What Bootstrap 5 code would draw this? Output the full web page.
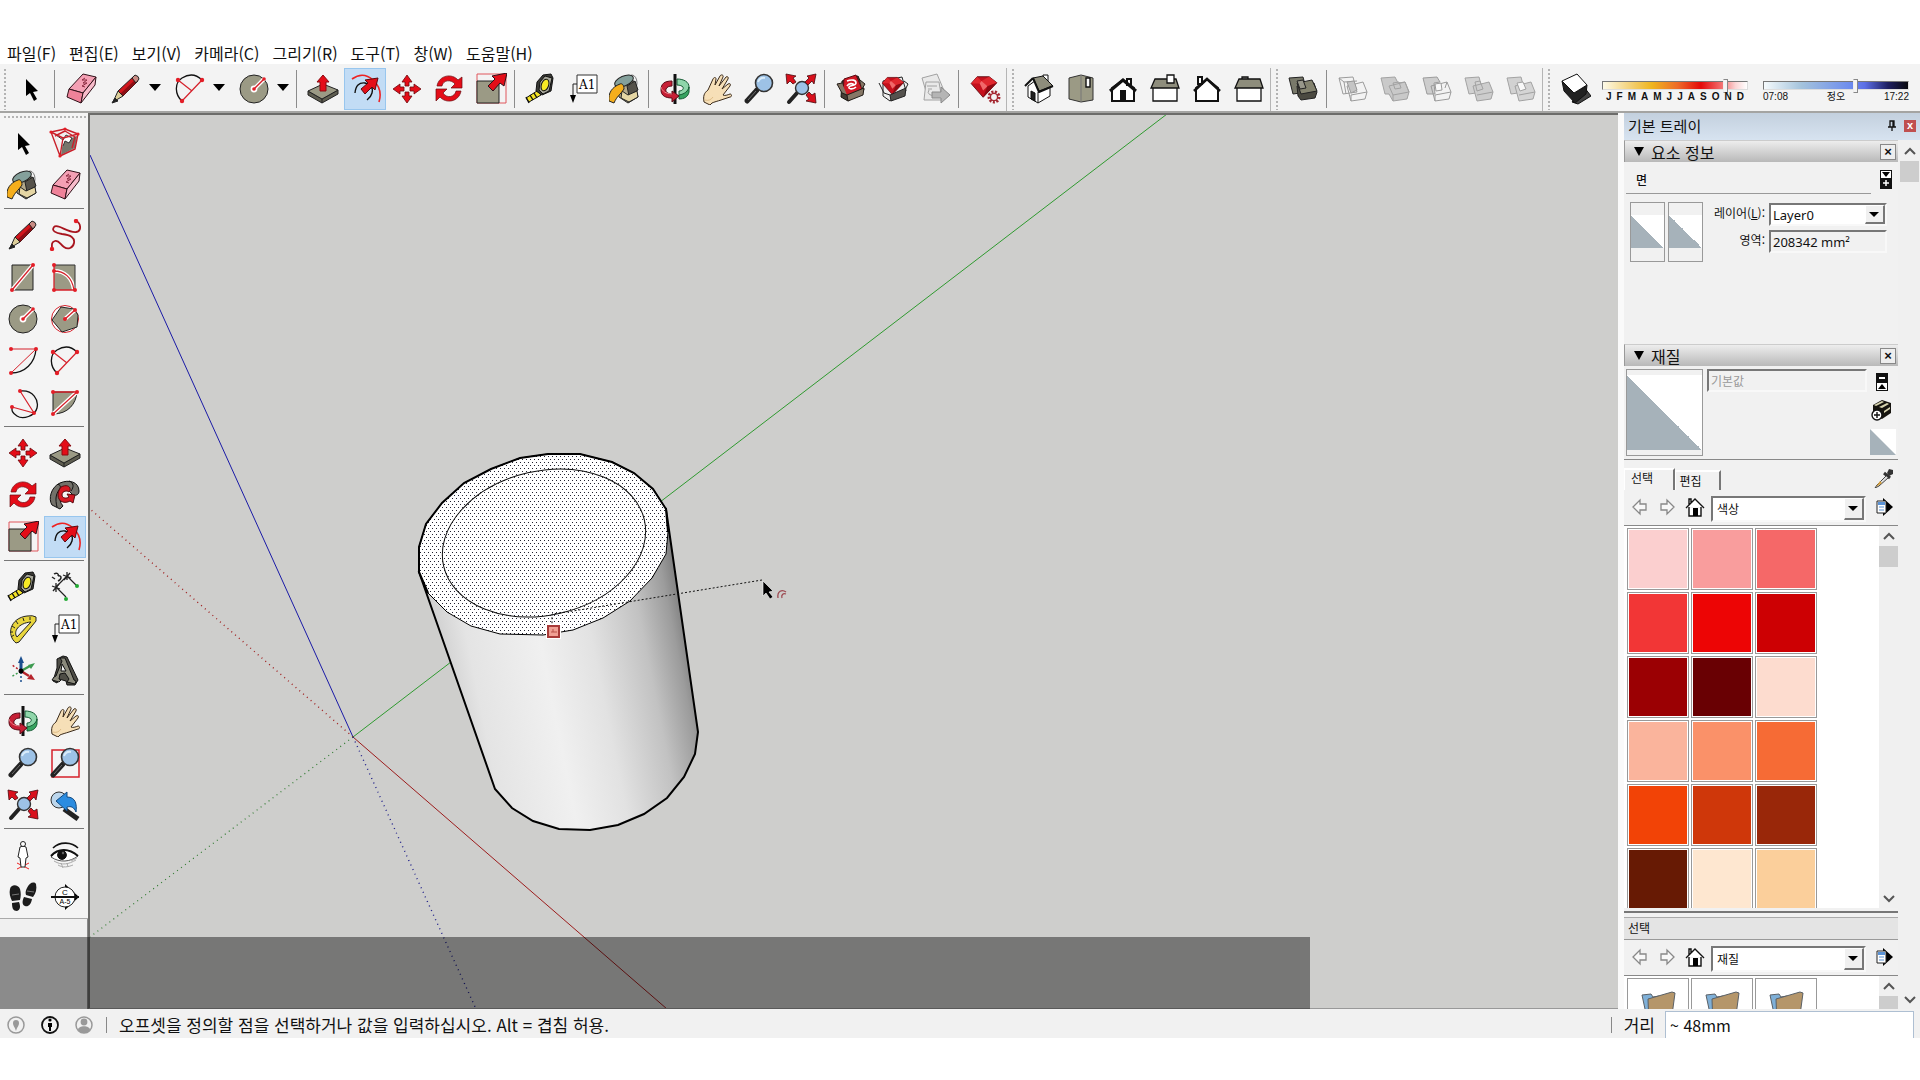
<!DOCTYPE html>
<html lang="ko">
<head>
<meta charset="utf-8">
<meta name="viewport" content="width=device-width, initial-scale=1">
<title>SketchUp</title>
<link rel="stylesheet" href="https://cdn.jsdelivr.net/npm/bootstrap@5.3.0/dist/css/bootstrap.min.css">
<script src="https://cdn.jsdelivr.net/npm/bootstrap@5.3.0/dist/js/bootstrap.bundle.min.js"></script>
<style>
  body { font-family: "Noto Sans CJK KR", "Noto Sans", sans-serif; font-size: 15px; color: #111; background: #fff; line-height: 20px; }
  button { font: inherit; color: inherit; padding: 0; border: 0; background: none; }
  .sheet { height: 100vh; padding: 40px 0 42px; }
  .menus { height: 24px; gap: 13px; padding: 3px 7px; font-size: 16px; }
  .menus a { color: #111; text-decoration: none; }
  .topbar { height: 49px; background: #f3f3f3; border-bottom: 2px solid #a4a4a2; padding-top: 4px; }
  .tool { width: 42px; height: 42px; flex: none; display: flex; align-items: center; justify-content: center; }
  .tool svg { width: 32px; height: 32px; overflow: visible; }
  .tool.on { background: #c2dcf5; border: 1px solid #98c6ee; }
  .faded { opacity: .42; filter: grayscale(1); }
  .with-drop { width: 64px; padding-left: 3px; flex: none; }
  .drop { width: 16px; height: 38px; display: flex; align-items: center; justify-content: center; }
  .drop::before, .pick::after { content: ""; border: 6px solid transparent; border-top: 7px solid #000; border-bottom: 0; }
  .vsep { width: 8px; flex: none; padding: 2px 0 2px 2px; }
  .vsep::before { content: ""; display: block; height: 38px; border-left: 1px solid #8c8c8c; }
  .grip { width: 10px; flex: none; padding: 1px 4px; }
  .grip.next { width: 12px; padding-left: 5px; border-left: 1px solid #b5b5b5; }
  .grip::before { content: ""; display: block; height: 41px; width: 2px; background: repeating-linear-gradient(#b3b3b3 0 2px, transparent 2px 4px); }
  .sun { width: 146px; flex: none; padding-top: 10px; margin-left: 6px; font: bold 10px/10px "Liberation Sans", "Noto Sans CJK KR", sans-serif; }
  .sun + .sun { margin-left: 15px; }
  .sun input { display: block; width: 100%; height: 14px; margin: 0; appearance: none; background: none; }
  .sun input::-webkit-slider-runnable-track { height: 9px; border: 1px solid #777; border-right-color: #ddd; border-bottom-color: #ddd; }
  .months::-webkit-slider-runnable-track { background: linear-gradient(90deg, #fdfae8, #f2cb65 22%, #efb51e 34%, #ee6a28 52%, #e40808 68%, #f26d6d 82%, #fbd5d5 92%, #fff); }
  .hours::-webkit-slider-runnable-track { background: linear-gradient(90deg, #f5fafc, #a4c3dc 26%, #6d8cee 60%, #5c6fe6 70%, #1e1f62 86%, #08080d); }
  .sun input::-webkit-slider-thumb { appearance: none; width: 5px; height: 14px; margin-top: -3px; background: #f4f4f4; border: 1px solid #888; border-left-color: #eee; }
  .side { width: 88px; flex: none; background: #f0f0f0; border-right: 1px solid #8a8a8a; }
  .palette { background: #f4f4f4; padding: 3px 2px 0; border-bottom: 1px solid #aaa; width: 88px; }
  .palette::before { content: ""; display: block; height: 2px; margin: 0 0 4px 2px; background: repeating-linear-gradient(90deg, #b3b3b3 0 2px, transparent 2px 4px); }
  .palette hr { margin: 2px 2px 5px; border-top: 1px solid #777; opacity: 1; }
  .scene { background: #cececc; border-top: 2px solid #6c6c6a; border-left: 2px solid #6c6c6a; overflow: hidden; border-bottom: 1px solid #999; min-width: 0; }
  .scene svg { display: block; width: 100%; height: 100%; }
  .caption-band { position: absolute; left: 0; bottom: 0; width: 68.25%; height: 72px; background: rgba(0,0,0,.42); }
  .tray { width: 302px; flex: none; background: #f1f1f1; border-left: 6px solid #fafafa; }
  .tray-title { height: 27px; background: linear-gradient(#c3d0de, #d7e3f0); padding: 0 4px 2px; font-size: 15px; }
  .close-red { width: 12px; height: 12px; background: #c0504f; color: #fff; font: bold 11px/11px "Liberation Sans", sans-serif; }
  .stack { width: 274px; }
  .part { height: 22px; padding: 0 2px 0 9px; font-size: 16px; background: linear-gradient(#ededed, #b9b9b9); border-top: 1px solid #ccc; border-left: 1px solid #999; }
  .part::before { content: ""; border: 5px solid transparent; border-top: 9px solid #000; border-bottom: 0; margin-right: 7px; }
  .part button { width: 16px; height: 16px; border: 1px solid #888; background: #eee; font: bold 13px/12px "Liberation Sans", sans-serif; }
  .entity { height: 182px; padding: 8px 2px 0; font-size: 12px; }
  .entity-name { height: 24px; border-bottom: 1px solid #999; width: 245px; padding: 0 10px; font-weight: 500; }
  .facts { gap: 3px; }
  .fields { padding-top: 1px; margin-left: -3px; }
  .swatch-tall { width: 35px; height: 60px; border: 1px solid #999; padding: 12px 0 13px; }
  .halves { background: linear-gradient(to top right, #a6b2ba 50%, #fff 50%); width: 100%; height: 100%; }
  .lbl { width: 62px; text-align: right; font-size: 12px; }
  .box { border: 2px solid #f8f8f8; border-top-color: #777; border-left-color: #777; height: 23px; width: 118px; padding: 0 2px; font: 13px/18px "Noto Sans", "Noto Sans CJK KR", sans-serif; color: #111; background: #f1f1f1; border-radius: 0; }
  .pick { position: relative; display: block; width: 118px; }
  .pick select { appearance: none; background: #fff; width: 100%; }
  .pick::before { content: ""; position: absolute; right: 2px; top: 2px; bottom: 2px; width: 20px; background: #f0f0f0; border: 1px solid #fff; border-right: 2px solid #777; border-bottom: 2px solid #777; pointer-events: none; }
  .pick::after { position: absolute; right: 8px; top: 50%; margin-top: -3px; border-width: 5px; border-top-width: 5px; pointer-events: none; }
  .pick.wide { width: 157px; }
  .wide select { display: block; height: 26px; font: 12px/20px "Noto Sans CJK KR", sans-serif; padding-left: 4px; }
  .material { height: 94px; padding: 3px 2px 0; border-bottom: 1px solid #888; }
  .preview { width: 77px; height: 87px; border: 1px solid #999; padding: 5px 0; }
  .material .box { width: 160px; margin-left: 4px; font: 12px/18px "Noto Sans CJK KR", sans-serif; color: #999; }
  .tabs { height: 30px; padding-top: 8px; font-size: 12px; line-height: 16px; }
  .tabs button { height: 22px; border-top: 2px solid #fff; border-right: 2px solid #777; border-left: 1px solid #fff; }
  .tabs .front { width: 51px; padding-right: 14px; padding-bottom: 4px; }
  .tabs .back { width: 46px; padding-right: 14px; height: 20px; margin-top: 2px; }
  .browse { height: 36px; border-bottom: 1px solid #888; padding: 3px 4px 0 7px; }
  .browse button { width: 18px; height: 24px; margin-right: 9px; display: flex; align-items: center; padding-bottom: 4px; }
  .browse button.nest { width: 20px; margin-right: 6px; }
  .browse button:last-child { margin: 0 0 0 10px; width: 18px; }
  .list { background: #fff; overflow: hidden; }
  .list.short { height: 33px; }
  .chips { width: 255px; padding: 2px 3px; gap: 2px; align-content: flex-start; overflow: hidden; }
  .chip { width: 62px; height: 62px; border: 1px solid #999; padding: 1px; flex: none; }
  .chip i { display: block; width: 100%; height: 100%; }
  .scroller { width: 19px; flex: none; background: #f0f0f0; }
  .scroller svg { width: 19px; height: 20px; flex: none; display: block; }
  .scroller b { display: block; height: 21px; background: #cdcdcd; }
  .outer { width: 22px; padding: 1px 1px 0 2px; }
  .split { border-top: 2px solid #777; height: 7px; margin-top: 3px; border-bottom: 1px solid #aaa; }
  .second { height: 22px; background: #e4e4e4; border-bottom: 1px solid #999; padding: 0 4px; font-size: 12px; }
  .status { height: 29px; background: #f1f1f1; font-size: 17px; padding-top: 2px; }
  .status > svg { width: 18px; height: 20px; margin: 0 9px 0 7px; flex: none; }
  .rule { width: 1px; height: 16px; background: #888; flex: none; }
  .measure { width: 249px; height: 27px; margin: 0 6px 0 10px; border: 1px solid #aebfd2; border-bottom: 0; padding: 0 4px; font-size: 16px; background: #fff; color: #111; }
</style>
</head>
<body>
<svg width="0" height="0" class="position-absolute" aria-hidden="true">
  <defs>
    <symbol id="select" viewBox="0 0 32 32"><path d="M11 6v17l4-3 4 8 3-2-4-7 5-1z"/></symbol>
    <symbol id="eraser" viewBox="0 0 32 32" stroke="#301018" stroke-linejoin="round"><path d="M18 1l13 3-13 16-14-4z" fill="#f4a0b4"/><path d="M4 16l14 4-2 10-14-6z" fill="#ef8299"/><path d="M31 4l-1 8-14 18 2-10z" fill="#f8bccb"/><path d="M20 5l-3 2 5 0-4 3 4 0-5 3 3 1" fill="none" stroke="#8a2b40"/></symbol>
    <symbol id="pencil" viewBox="0 0 32 32" stroke="#222" stroke-linejoin="round"><path d="M8 18L24 3l4 5-15 15z" fill="#d2151c"/><path d="M10 21L26 6l2 2-15 15z" fill="#8c0e14" stroke="none"/><path d="M22 5l3-3q4 1 4 4l-3 4z" fill="#c98c84"/><path d="M8 18l5 5-10 6z" fill="#ddcf9a"/><path d="M5 25l3 3-6 2z" fill="#222"/></symbol>
    <symbol id="arc2" viewBox="0 0 32 32" fill="none"><path d="M8 28C1 22 0 10 8 5s15-3 20 2" stroke="#111" stroke-width="1.3"/><path d="M8 28L28 7M4 7l14 11" stroke="#d5202a" stroke-width="1.2"/><g fill="#e31e27"><circle cx="8" cy="28" r="2.2"/><circle cx="28" cy="7" r="2.2"/><circle cx="4" cy="7" r="2.2"/></g></symbol>
    <symbol id="circle" viewBox="0 0 32 32"><circle cx="16" cy="16" r="14" fill="#9b9a85" stroke="#222"/><path d="M16 16L26 6" stroke="#fff" stroke-width="4"/><circle cx="16" cy="16" r="3.4" fill="#fff"/><path d="M16 16L26 6" stroke="#d5202a" stroke-width="1.4"/><circle cx="16" cy="16" r="1.8" fill="#e31e27"/><circle cx="26" cy="6" r="1.8" fill="#e31e27"/></symbol>
    <symbol id="push" viewBox="0 0 32 32" stroke="#222" stroke-linejoin="round"><path d="M1 18v4l14 8 16-9v-4l-16 9z" fill="#5e5d50"/><path d="M1 18l15-7 15 6-16 9zM15 26v4" fill="#9b9a85"/><path d="M16 2l6 7h-3v9h-6V9h-3z" fill="#e40d18" stroke="#8a0a10"/></symbol>
    <symbol id="offset" viewBox="0 0 32 32" fill="none"><path d="M3 6Q14-2 24 7t6 22" stroke="#e22" stroke-width="1.6"/><path d="M6 20q1-11 10-10 9 2 7 10-1 4-5 7" stroke="#111" stroke-width="1.4"/><path d="M29 5l-3 12-3-3-7 7-4-5 7-6-3-3z" fill="#e40d18" stroke="#5a0a0e"/></symbol>
    <symbol id="move" viewBox="0 0 32 32"><g fill="#e40d18" stroke="#6a0a0e" stroke-width=".8"><path d="M16 2l5 7h-3v4h-4V9h-3z"/><path d="M16 30l-5-7h3v-4h4v4h3z"/><path d="M2 16l7-5v3h4v4H9v3z"/><path d="M30 16l-7 5v-3h-4v-4h4v-3z"/></g></symbol>
    <symbol id="rotate" viewBox="0 0 32 32" fill="#e40d18" stroke="#6a0a0e" stroke-width=".7"><path d="M4 13C6 2 19 0 25 7l4-3v11H18l4-4C18 6 10 7 9 13z"/><path d="M28 18c-2 11-15 13-21 6l-4 4V16h11l-4 4c4 6 12 4 13-2z"/></symbol>
    <symbol id="scale" viewBox="0 0 32 32"><path d="M2 30V1h29v29z" fill="none" stroke="#e0575c"/><path d="M2 8h22v22H2z" fill="#9b9a85" stroke="#222"/><path d="M32 0l-3 13-4-3-7 8-5-5 7-7-3-3z" fill="#e40d18" stroke="#301018"/></symbol>
    <symbol id="tape" viewBox="0 0 32 32" stroke="#111" stroke-linejoin="round"><path d="M12 18l4 4L4 29l-3-4z" fill="#f4e327"/><path d="M1 24l3 6M5 22l3 5M9 20l3 5" stroke-width="1.4"/><path d="M12 9l6-7 8-1 2 4-2 13-9 4-6-4z" fill="#3a3a36"/><path d="M15 9l5-6 7 2-3 13-6 3-4-4z" fill="#a8a89c"/><ellipse cx="20" cy="12" rx="3.6" ry="6" transform="rotate(20 20 12)" fill="#f7ea25"/></symbol>
    <symbol id="textt" viewBox="0 0 32 32"><path d="M10 2h20v18H10z" fill="#fff" stroke="#333"/><path d="M10 11H6v12" fill="none" stroke="#222"/><path d="M3 22h6l-3 8z"/><text x="12" y="16" font-family="DejaVu Serif, serif" font-size="12">A1</text></symbol>
    <symbol id="paint" viewBox="0 0 32 32" stroke="#222" stroke-linejoin="round"><ellipse cx="23" cy="10" rx="5" ry="8" fill="none" stroke="#777"/><path d="M8 8L25 8l4 16-10 6-9-6z" fill="#b5aa8b"/><path d="M18 13l8-5 3 9-9 6z" fill="#55524a"/><path d="M13 18l6 4 9-4 1 6-9 5-8-4z" fill="#e5d6a4"/><ellipse cx="15" cy="8" rx="10" ry="5" transform="rotate(-24 15 8)" fill="#84a09b"/><path d="M11 11C3 14-1 20 0 28l5 2c3-7 6-8 10-14 0-4-2-6-4-5z" fill="#f5ae1c"/></symbol>
    <symbol id="orbit" viewBox="0 0 32 32" stroke-linejoin="round"><path d="M18 6c7 0 12 3 12 8s-4 8-10 9v-5c3 0 5-2 4-4-1-1-3-2-6-2z" fill="#8fd6aa" stroke="#155c34"/><path d="M30 14v5c-1 5-5 7-10 7v-4c6-1 9-4 10-8z" fill="#37a360" stroke="#155c34"/><path d="M16 1v30" stroke="#111" stroke-width="3"/><path d="M13 8C5 8 2 11 2 17s5 8 11 8v4l7-6-7-5v3c-4 0-7-2-6-5 1-2 3-3 6-3z" fill="#c61f35" stroke="#5a0a16"/><path d="M2 14c1 4 5 7 11 7" fill="none" stroke="#f08088"/></symbol>
    <symbol id="hand" viewBox="0 0 32 32"><path d="M3 29c-1-6 0-9 4-12L12 6c1-2 3-2 3 0l-1 6 5-9c1-2 4-1 3 1l-4 9 7-9c1-1 3 0 2 2l-6 10 6-5c2-1 3 0 2 2l-7 9c1 1 5 0 7-1 2 0 2 3 0 3l-9 3c-3 1-7 2-9 3l-2 2z" fill="#f6dfb7" stroke="#3a2a1a"/><path d="M4 27c3 1 6 0 8-3" fill="none" stroke="#dfbd87"/></symbol>
    <symbol id="zoom" viewBox="0 0 32 32"><path d="M14 17L4 28" stroke="#222" stroke-width="5" stroke-linecap="round"/><path d="M13 18L5 27" stroke="#6b6b6b"/><circle cx="21" cy="10" r="8.5" fill="#9dc2e6" stroke="#333" stroke-width="1.6"/><path d="M15 9q2-5 7-4" fill="none" stroke="#d9ecfa" stroke-width="2"/></symbol>
    <symbol id="zoomext" viewBox="0 0 32 32"><path d="M12 20L4 29" stroke="#222" stroke-width="4" stroke-linecap="round"/><circle cx="17" cy="15" r="6.5" fill="#9dc2e6" stroke="#333" stroke-width="1.4"/><g fill="#d9101c" stroke="#4a0a0e" stroke-width=".8"><path d="M1 1l10 2-3 2 3 4-3 2-3-3-3 3z"/><path d="M31 1l-9 2 2 2-4 4 3 3 4-4 2 3z"/><path d="M31 30l-1-10-3 2-3-3-3 3 3 4-3 2z"/></g></symbol>
    <symbol id="warehouse" viewBox="0 0 32 32" stroke-linejoin="round"><path d="M7 8l16-5 6 14-16 11-7-4z" fill="#433c34" stroke="#15110e"/><path d="M9 6l12-4 6 14-13 8-6-5z" fill="#d01824" stroke="#5a0a10"/><path d="M12 8c5-2 9-1 9 2s-6 2-7 4 4 3 7 0M12 13c2-3 6-3 7-1" fill="none" stroke="#fff" stroke-width="1.6"/><path d="M7 10l-5 1 5 9 5 2M25 7l5 4-3 5M12 22l17-7-1 7-15 6z" fill="#867766" stroke="#221c18"/></symbol>
    <symbol id="extbox" viewBox="0 0 32 32" stroke-linejoin="round"><path d="M6 8l19-4 4 14-16 10-7-5z" fill="#efefef" stroke="#222"/><use href="#ruby" x="4" y="3" width="24" height="20"/><path d="M13 22l16-7-1 8-14 5z" fill="#55524e" stroke="#222"/><path d="M2 10l5 10 6 2M27 8l4 3-2 4" fill="none" stroke="#222"/></symbol>
    <symbol id="ruby" viewBox="0 0 32 28"><path d="M8 2h14l9 7-16 17L1 10z" fill="#c5101c" stroke="#5a060c"/><path d="M8 2l5 5 9-5 9 7-11 4-8-3-11 0z" fill="#e0282e"/><path d="M13 7l7 6-5 5-4-8z" fill="#f0696a"/><path d="M20 13l11-4-16 17z" fill="#8d0a13"/></symbol>
    <symbol id="share" viewBox="0 0 32 32" fill="#e9e9e9" stroke="#a2a2a2"><path d="M3 5l15-4 8 19-17 5z"/><path d="M7 9h13l3 18H5z"/><path d="M8 13h10M9 16h4M10 17a3 3 0 1 0 5 4" fill="none"/><path d="M13 19h9v-5l9 8-9 8v-5h-9z" fill="#b5b5b5" stroke="#8a8a8a"/></symbol>
    <symbol id="extman" viewBox="0 0 32 32"><use href="#ruby" x="1" y="2" width="28" height="24"/><circle cx="25" cy="24" r="5" fill="#f3f3f3" stroke="#a42630" stroke-width="3" stroke-dasharray="2 1.4"/><circle cx="25" cy="24" r="3.6" fill="#f3f3f3" stroke="#a42630" stroke-width="1.4"/></symbol>
    <symbol id="iso" viewBox="0 0 32 32" stroke="#111" stroke-linejoin="round"><path d="M5 13l11-8 11 8v10l-12 7-10-6z" fill="#fff"/><path d="M15 19v11" /><path d="M20 2h5v9h-5z" fill="#fff"/><path d="M10 5l10-2 10 10-14 5z" fill="#8e8d7c"/><path d="M10 5L2 13M10 5l6 14 14-6" fill="none" stroke-width="2"/><path d="M8 18l4 2v8l-4-2z" fill="#222"/></symbol>
    <symbol id="topv" viewBox="0 0 32 32" stroke="#333"><path d="M4 5l12-3 12 3v22l-12 2-12-3z" fill="#9b9a85"/><path d="M16 2v27" stroke="#777"/><path d="M21 5h4v9h-4z" fill="#fff" stroke="#111" stroke-width="1.4"/></symbol>
    <symbol id="front" viewBox="0 0 32 32"><path d="M20 6h4v6h-4zM5 15L16 7l11 8v13H5z" fill="#fff" stroke="#111" stroke-width="2"/><path d="M3 18L16 7l13 11" fill="none" stroke="#111" stroke-width="3"/><path d="M13 17h6v12h-6z" fill="#111"/></symbol>
    <symbol id="right" viewBox="0 0 32 32" stroke="#111" stroke-width="1.3"><path d="M4 14h24v14H4z" fill="#fff"/><path d="M6 6h21l3 9H2z" fill="#8e8d7c"/><path d="M18 2h7v8h-7z" fill="#fff"/></symbol>
    <symbol id="back" viewBox="0 0 32 32"><path d="M7 4h4v7H7zM5 15L16 6l11 9v13H5z" fill="#fff" stroke="#111" stroke-width="2"/><path d="M3 18L16 6l13 12" fill="none" stroke="#111" stroke-width="2.6"/></symbol>
    <symbol id="left" viewBox="0 0 32 32" stroke="#111" stroke-width="1.3"><path d="M9 4h6v3H9z" fill="#aaa"/><path d="M4 14h24v14H4z" fill="#fff"/><path d="M6 6h21l3 9H2z" fill="#8e8d7c"/></symbol>
    <symbol id="shell" viewBox="0 0 32 32" stroke="#222" stroke-linejoin="round"><path d="M2 5l14-1 4 15-14 2z" fill="#79796a"/><path d="M10 13l17-3 3 9-2 6-14 2-3-4z" fill="#4b4a41"/><path d="M10 10l15-3 5 11-16 3z" fill="#84836f"/><path d="M10 8l6-1 3 8-6 1z" fill="#98978a"/></symbol>
    <symbol id="outl" viewBox="0 0 32 32" stroke="#222" fill="none"><path d="M2 5l14-1 4 15-14 2zM2 5l5 4 13-1M7 9l2 12"/><path d="M10 13l16-4 4 10-2 7-14 2zM14 22l16-3M14 22v6"/><path d="M10 9l7-1 3 9-6 3z" fill="#888"/></symbol>
    <symbol id="union" viewBox="0 0 32 32" stroke="#333"><path d="M2 5l14-1 3 6 7-1 4 10-2 7-14 2-4-7H6z" fill="#909090"/><path d="M10 13l16-4 4 10-16 3zM14 10l6-1 2 6-6 1zM14 22v6" fill="none"/></symbol>
    <symbol id="subtract" viewBox="0 0 32 32" stroke="#222" fill="none"><path d="M2 5l14-1 3 5-6 1 1 11-8 0z" fill="#999"/><path d="M10 13l16-4 4 10-2 7-14 2zM14 22l16-3M14 22v6M26 9l-2 6"/><path d="M14 11l6-1 1 7-6 1z" fill="#fff"/></symbol>
    <symbol id="trim" viewBox="0 0 32 32" stroke="#333"><path d="M2 5l14-1 4 15-14 2z" fill="#a5a5a5"/><path d="M10 13l16-4 4 10-2 7-14 2z" fill="#999"/><path d="M12 9l5-1 3 8-6 2zM14 22l16-3" fill="none"/></symbol>
    <symbol id="splitt" viewBox="0 0 32 32" stroke="#333"><path d="M2 5l14-1 4 15-14 2z" fill="#a5a5a5"/><path d="M10 13l16-4 4 10-2 7-14 2z" fill="#aaa"/><path d="M12 10l6-1 3 7-6 2z" fill="#fff"/><path d="M14 22l16-3" fill="none"/></symbol>
    <symbol id="shadow" viewBox="0 0 32 32" stroke="#111" stroke-linejoin="round"><path d="M13 29l6 2 13-8-7-9z" fill="#444"/><path d="M3 8l2 10 11 12 11-9 1-9-12 8z" fill="#222"/><path d="M3 8l15-7 10 11-13 8z" fill="#fff"/></symbol>
    <symbol id="component" viewBox="0 0 32 32" stroke-linejoin="round"><path d="M4 5l12-3 13 5-2 15-16 7z" fill="#f2eeee"/><path d="M14 14l14-5-2 12-14 7z" fill="#77766c"/><path d="M7 8l7 5 3-5 6 3-3 5-4-2-2 5" fill="#fff" stroke="#333"/><path d="M2 5l14-3 13 5-3 15-15 7zM2 5l12 6 15-4M14 11l-3 18M6 9l10-5 10 6-3 11" fill="none" stroke="#c9202b" stroke-width="1.4"/><g fill="#e31e27"><circle cx="2" cy="5" r="1.6"/><circle cx="16" cy="2" r="1.6"/><circle cx="29" cy="7" r="1.6"/><circle cx="11" cy="29" r="1.6"/></g></symbol>
    <symbol id="free" viewBox="0 0 32 32" fill="none"><path d="M27 2c5 2 6 10 0 11C19 14 8 4 5 8s2 6 8 7c9 1 13 4 12 9s-6 7-10 4-5-7-9-6-3 4-3 8" stroke="#a8141e" stroke-width="1.8"/><g fill="#e31e27"><circle cx="27" cy="2" r="2.2"/><circle cx="3" cy="30" r="2.2"/></g></symbol>
    <symbol id="rect" viewBox="0 0 32 32"><path d="M5 4h21v25H5z" fill="#9b9a85" stroke="#222"/><path d="M5 29L26 4" stroke="#fff" stroke-width="4"/><path d="M5 29L26 4" stroke="#d5202a" stroke-width="1.3"/><g fill="#e31e27"><circle cx="5" cy="29" r="2"/><circle cx="26" cy="4" r="2"/></g></symbol>
    <symbol id="rotrect" viewBox="0 0 32 32"><path d="M5 4h21v25H5z" fill="#9b9a85"/><path d="M5 10c10 0 18 6 20 19" fill="none" stroke="#fff" stroke-width="4"/><path d="M5 4h21v25" fill="none" stroke="#333"/><path d="M5 4v25h21M5 10c10 0 18 6 20 19" fill="none" stroke="#d5202a" stroke-width="1.3"/><g fill="#e31e27"><circle cx="5" cy="4" r="2"/><circle cx="5" cy="10" r="2"/><circle cx="5" cy="29" r="2"/><circle cx="26" cy="29" r="2"/></g></symbol>
    <symbol id="polygon" viewBox="0 0 32 32"><circle cx="16" cy="16" r="13.5" fill="#fff" stroke="#d5202a"/><path d="M25 6L12 4 3 17l10 12 15-5 1-12z" fill="#9b9a85" stroke="#222"/><path d="M16 16L26 7" stroke="#fff" stroke-width="4"/><path d="M16 16L26 7" stroke="#d5202a" stroke-width="1.4"/><circle cx="16" cy="16" r="2" fill="#e31e27"/><circle cx="26" cy="7" r="2" fill="#e31e27"/></symbol>
    <symbol id="arc1" viewBox="0 0 32 32" fill="none"><path d="M29 4C28 18 18 28 4 28" stroke="#111" stroke-width="1.3"/><path d="M4 4h25L4 28" stroke="#d5202a"/><g fill="#e31e27"><circle cx="4" cy="4" r="2"/><circle cx="29" cy="4" r="2"/><circle cx="4" cy="28" r="2"/></g></symbol>
    <symbol id="arc3" viewBox="0 0 32 32" fill="none"><path d="M14 4c12-1 18 9 16 17S16 33 10 29s-5-6-5-9" stroke="#111" stroke-width="1.3"/><path d="M13 4l14 22L5 20" stroke="#d5202a" stroke-width="1.2"/><g fill="#e31e27"><circle cx="13" cy="4" r="2"/><circle cx="27" cy="26" r="2"/><circle cx="5" cy="20" r="2"/></g></symbol>
    <symbol id="pie" viewBox="0 0 32 32"><path d="M4 5h24c-1 12-9 22-24 22z" fill="#9b9a85" stroke="#222"/><path d="M4 27L28 5" stroke="#fff" stroke-width="4"/><path d="M4 5h24L4 27" fill="none" stroke="#d5202a" stroke-width="1.3"/><g fill="#e31e27"><circle cx="4" cy="5" r="2"/><circle cx="28" cy="5" r="2"/><circle cx="4" cy="27" r="2"/></g></symbol>
    <symbol id="follow" viewBox="0 0 32 32" stroke="#111" stroke-linejoin="round"><path d="M30 12C30 3 20 0 11 4S-1 20 3 26l8 4 3-3c-6-7-3-15 5-16l5 5c4 1 6-1 6-4z" fill="#73716a"/><path d="M9 5c4 2 2 4 1 6-3 4-4 9-2 17M20 2c5 2 5 6 2 10" fill="none"/><path d="M12 8c8-4 11 2 8 5-2-2-7-1-7 3 0 3 4 4 7 2l-2-3 8 1-2 8-3-2c-5 3-12 1-12-6 0-3 1-5 3-8z" fill="#d81722" stroke="#5a0a0e"/></symbol>
    <symbol id="dim" viewBox="0 0 32 32" fill="none" stroke="#222"><path d="M18 5l9 9M7 16l10 10M7 16L18 5" stroke-width="1.2"/><path d="M14 4l8 3M21 2l-6 7M18 1v8M3 15l8 3M10 13l-6 7M7 12v9" stroke-width="1.3"/><path d="M5 3c3-2 5 0 4 2M9 5c4-1 4 3 0 5M3 6l3 2" stroke-width="1.5"/><circle cx="28" cy="15" r="2" fill="#2a3" stroke="none"/><circle cx="17" cy="28" r="2" fill="#2a3" stroke="none"/></symbol>
    <symbol id="protractor" viewBox="0 0 32 32" stroke="#222" stroke-linejoin="round"><path d="M9 30C-1 22 3 5 20 3q6-1 9 1v4L12 29z" fill="#e8d53c"/><path d="M10 24c-4-5 1-14 14-15z" fill="#f3f3f3"/><path d="M4 24l3-2M3 19h3M5 13l3 2M9 8l2 3M16 5l1 3M23 4v3" fill="none"/></symbol>
    <symbol id="axes" viewBox="0 0 32 32"><path d="M14 16V6" stroke="#1b4f8f" stroke-width="3"/><path d="M14 1l3 7h-6z" fill="#1b4f8f"/><path d="M14 16L23 11" stroke="#3d9b50" stroke-width="2.5"/><path d="M28 8l-4 6-3-4z" fill="#3d9b50"/><path d="M14 16l8 5" stroke="#b6242c" stroke-width="2.5"/><path d="M28 25l-8-1 4-5z" fill="#b6242c"/><g stroke-dasharray="2 2" stroke-width="1.5"><path d="M14 17v10" stroke="#1b4f8f"/><path d="M14 16L4 22" stroke="#3d9b50"/><path d="M14 16L5 10" stroke="#b6242c"/></g><circle cx="14" cy="16" r="2.5"/></symbol>
    <symbol id="bigA" viewBox="0 0 32 32" stroke="#111" stroke-linejoin="round"><path d="M8 4l6-3 4 1 11 23-3 5-8 0-1-4-7-2-2 4-4-2 4-13z" fill="#4e4d46"/><path d="M11 3l5 0 9 22 2 1-1 3-8-2 2-3-4-6-5 1-1 5 2 1-2 2-7-2 2-3 2-1 6-15z" fill="#8b8a7c"/><path d="M13 9l4 7h-5z" fill="#f3f3f3"/></symbol>
    <symbol id="zoomwin" viewBox="0 0 32 32"><path d="M3 3h27v27H3z" fill="none" stroke="#d5202a" stroke-width="1.5"/><use href="#zoom"/></symbol>
    <symbol id="prev" viewBox="0 0 32 32"><circle cx="10" cy="11" r="8" fill="#bcd6ec" stroke="#333"/><path d="M15 20l14 10" stroke="#222" stroke-width="5"/><path d="M7 12l11-9v5c9 0 10 8 9 15-2-5-5-6-9-5v4z" fill="#2b8ce0" stroke="#124a80"/></symbol>
    <symbol id="person" viewBox="0 0 32 32" fill="#fff" stroke="#222"><path d="M10 24l12 6M22 24l-12 6" stroke="#e22"/><path d="M13 8q3-2 6 0l2 10-2 1-1 9h-4l-1-9-2-1z"/><circle cx="16" cy="5" r="2.5"/></symbol>
    <symbol id="eye" viewBox="0 0 32 32" fill="none" stroke="#111"><path d="M4 9C11 2 23 3 29 9" stroke-width="1.6"/><path d="M2 18c7-9 18-9 27-1-8 6-18 7-27 1z" fill="#fff" stroke="#555"/><path d="M2 17c7-8 18-8 27 0" stroke-width="2"/><circle cx="13" cy="16" r="4.4" fill="#111"/><circle cx="14" cy="14" r="1.2" fill="#fff"/><path d="M5 22c8 5 15 3 22-1M9 26c5 3 10 2 15 0M22 22l6-3M12 24l2 5M18 24l1 4" stroke="#aaa"/></symbol>
    <symbol id="feet" viewBox="0 0 32 32" fill="#1c1c1c"><path d="M3 8c1-5 8-5 10 0 1 4 1 7 0 11l-8 1C3 16 2 12 3 8zM5 22l7-1c2 5 1 8-2 9-4 0-5-3-5-8zM20 7c2-5 7-7 9-4 1 5 0 9-3 13l-7-2c-1-3 0-5 1-7zM17 16l8 2c-1 6-4 8-7 7s-3-5-1-9z"/><path d="M5 14l7-1M20 10l7 1" stroke="#777" stroke-width="1"/></symbol>
    <symbol id="section" viewBox="0 0 32 32"><path d="M16 3l14 13-14 13z"/><circle cx="16" cy="16" r="10" fill="#fff" stroke="#222"/><path d="M2 16h28" stroke="#111" stroke-width="2"/><text x="16" y="14" font-size="8" text-anchor="middle" font-family="Liberation Sans, sans-serif">C</text><text x="16" y="23" font-size="7" text-anchor="middle" font-family="Liberation Sans, sans-serif">A-5</text></symbol>
    <symbol id="goback" viewBox="0 0 18 18"><path d="M2 9l7-7v4h6v6H9v4z" fill="#f8f8f8" stroke="#888" stroke-width="1.3"/></symbol>
    <symbol id="gofwd" viewBox="0 0 18 18"><path d="M16 9L9 2v4H3v6h6v4z" fill="#f8f8f8" stroke="#888" stroke-width="1.3"/></symbol>
    <symbol id="home" viewBox="0 0 20 20"><path d="M4 10v9h12v-9M1 11l9-9 9 9M4 8V2h2v4" fill="#fff" stroke="#111" stroke-width="1.4"/><path d="M8 11h5v8H8z"/></symbol>
    <symbol id="details" viewBox="0 0 18 18"><path d="M7 0l10 9-10 9z"/><path d="M1 3h9v12H1z" fill="#fff" stroke="#222"/><path d="M2 4h7v3H2z" fill="#5b93d6"/><path d="M3 9h5M3 12h5" stroke="#5b93d6"/></symbol>
    <symbol id="up" viewBox="0 0 19 20"><path d="M5 13l5-5 5 5" fill="none" stroke="#555" stroke-width="2"/></symbol>
    <symbol id="down" viewBox="0 0 19 20"><path d="M5 8l5 5 5-5" fill="none" stroke="#555" stroke-width="2"/></symbol>
    <symbol id="folder" viewBox="0 0 58 58"><path d="M13 15l9-1 2 3 6-1v30l-11-3z" fill="#7fb0d8" stroke="#5a6066"/><path d="M19 19l24-7 3 1-4 30-22 3z" fill="#b5966a" stroke="#5a6066"/></symbol>
  </defs>
</svg>

<div class="sheet d-flex flex-column overflow-hidden">
  <nav class="menus d-flex flex-shrink-0" aria-label="메뉴">
    <a href="#">파일(F)</a><a href="#">편집(E)</a><a href="#">보기(V)</a><a href="#">카메라(C)</a><a href="#">그리기(R)</a><a href="#">도구(T)</a><a href="#">창(W)</a><a href="#">도움말(H)</a>
  </nav>

  <div class="topbar d-flex flex-shrink-0 overflow-hidden" role="toolbar">
    <span class="grip"></span>
    <button class="tool" type="button"><svg><use href="#select"/></svg></button>
    <span class="vsep"></span>
    <button class="tool" type="button"><svg><use href="#eraser"/></svg></button>
    <span class="with-drop d-flex"><button class="tool" type="button"><svg><use href="#pencil"/></svg></button><button class="drop" type="button"></button></span>
    <span class="with-drop d-flex"><button class="tool" type="button"><svg><use href="#arc2"/></svg></button><button class="drop" type="button"></button></span>
    <span class="with-drop d-flex"><button class="tool" type="button"><svg><use href="#circle"/></svg></button><button class="drop" type="button"></button></span>
    <span class="vsep"></span>
    <button class="tool" type="button"><svg><use href="#push"/></svg></button>
    <button class="tool on" type="button"><svg><use href="#offset"/></svg></button>
    <button class="tool" type="button"><svg><use href="#move"/></svg></button>
    <button class="tool" type="button"><svg><use href="#rotate"/></svg></button>
    <button class="tool" type="button"><svg><use href="#scale"/></svg></button>
    <span class="vsep"></span>
    <button class="tool" type="button"><svg><use href="#tape"/></svg></button>
    <button class="tool" type="button"><svg><use href="#textt"/></svg></button>
    <button class="tool" type="button"><svg><use href="#paint"/></svg></button>
    <span class="vsep"></span>
    <button class="tool" type="button"><svg><use href="#orbit"/></svg></button>
    <button class="tool" type="button"><svg><use href="#hand"/></svg></button>
    <button class="tool" type="button"><svg><use href="#zoom"/></svg></button>
    <button class="tool" type="button"><svg><use href="#zoomext"/></svg></button>
    <span class="vsep"></span>
    <button class="tool" type="button"><svg><use href="#warehouse"/></svg></button>
    <button class="tool" type="button"><svg><use href="#extbox"/></svg></button>
    <button class="tool" type="button"><svg><use href="#share"/></svg></button>
    <span class="vsep"></span>
    <button class="tool" type="button"><svg><use href="#extman"/></svg></button>
    <span class="grip next"></span>
    <button class="tool" type="button"><svg><use href="#iso"/></svg></button>
    <button class="tool" type="button"><svg><use href="#topv"/></svg></button>
    <button class="tool" type="button"><svg><use href="#front"/></svg></button>
    <button class="tool" type="button"><svg><use href="#right"/></svg></button>
    <button class="tool" type="button"><svg><use href="#back"/></svg></button>
    <button class="tool" type="button"><svg><use href="#left"/></svg></button>
    <span class="grip next"></span>
    <button class="tool" type="button"><svg><use href="#shell"/></svg></button>
    <span class="vsep"></span>
    <button class="tool faded" type="button"><svg><use href="#outl"/></svg></button>
    <button class="tool faded" type="button"><svg><use href="#union"/></svg></button>
    <button class="tool faded" type="button"><svg><use href="#subtract"/></svg></button>
    <button class="tool faded" type="button"><svg><use href="#trim"/></svg></button>
    <button class="tool faded" type="button"><svg><use href="#splitt"/></svg></button>
    <span class="grip next"></span>
    <button class="tool" type="button"><svg><use href="#shadow"/></svg></button>
    <div class="sun">
      <input class="months" type="range" min="0" max="1000" value="865" aria-label="날짜">
      <div class="d-flex justify-content-between px-1"><span>J</span><span>F</span><span>M</span><span>A</span><span>M</span><span>J</span><span>J</span><span>A</span><span>S</span><span>O</span><span>N</span><span>D</span></div>
    </div>
    <div class="sun">
      <input class="hours" type="range" min="0" max="1000" value="640" aria-label="시간">
      <div class="d-flex justify-content-between fw-normal"><span>07:08</span><span>정오</span><span>17:22</span></div>
    </div>
  </div>

  <div class="d-flex flex-grow-1 position-relative overflow-hidden">
    <aside class="side">
      <div class="palette">
        <div class="d-flex flex-wrap">
          <button class="tool" type="button"><svg><use href="#select"/></svg></button><button class="tool" type="button"><svg><use href="#component"/></svg></button>
          <button class="tool" type="button"><svg><use href="#paint"/></svg></button><button class="tool" type="button"><svg><use href="#eraser"/></svg></button>
        </div>
        <hr>
        <div class="d-flex flex-wrap">
          <button class="tool" type="button"><svg><use href="#pencil"/></svg></button><button class="tool" type="button"><svg><use href="#free"/></svg></button>
          <button class="tool" type="button"><svg><use href="#rect"/></svg></button><button class="tool" type="button"><svg><use href="#rotrect"/></svg></button>
          <button class="tool" type="button"><svg><use href="#circle"/></svg></button><button class="tool" type="button"><svg><use href="#polygon"/></svg></button>
          <button class="tool" type="button"><svg><use href="#arc1"/></svg></button><button class="tool" type="button"><svg><use href="#arc2"/></svg></button>
          <button class="tool" type="button"><svg><use href="#arc3"/></svg></button><button class="tool" type="button"><svg><use href="#pie"/></svg></button>
        </div>
        <hr>
        <div class="d-flex flex-wrap">
          <button class="tool" type="button"><svg><use href="#move"/></svg></button><button class="tool" type="button"><svg><use href="#push"/></svg></button>
          <button class="tool" type="button"><svg><use href="#rotate"/></svg></button><button class="tool" type="button"><svg><use href="#follow"/></svg></button>
          <button class="tool" type="button"><svg><use href="#scale"/></svg></button><button class="tool on" type="button"><svg><use href="#offset"/></svg></button>
        </div>
        <hr>
        <div class="d-flex flex-wrap">
          <button class="tool" type="button"><svg><use href="#tape"/></svg></button><button class="tool" type="button"><svg><use href="#dim"/></svg></button>
          <button class="tool" type="button"><svg><use href="#protractor"/></svg></button><button class="tool" type="button"><svg><use href="#textt"/></svg></button>
          <button class="tool" type="button"><svg><use href="#axes"/></svg></button><button class="tool" type="button"><svg><use href="#bigA"/></svg></button>
        </div>
        <hr>
        <div class="d-flex flex-wrap">
          <button class="tool" type="button"><svg><use href="#orbit"/></svg></button><button class="tool" type="button"><svg><use href="#hand"/></svg></button>
          <button class="tool" type="button"><svg><use href="#zoom"/></svg></button><button class="tool" type="button"><svg><use href="#zoomwin"/></svg></button>
          <button class="tool" type="button"><svg><use href="#zoomext"/></svg></button><button class="tool" type="button"><svg><use href="#prev"/></svg></button>
        </div>
        <hr>
        <div class="d-flex flex-wrap">
          <button class="tool" type="button"><svg><use href="#person"/></svg></button><button class="tool" type="button"><svg><use href="#eye"/></svg></button>
          <button class="tool" type="button"><svg><use href="#feet"/></svg></button><button class="tool" type="button"><svg><use href="#section"/></svg></button>
        </div>
      </div>
    </aside>

    <main class="scene flex-grow-1">
      <svg viewBox="90 115 1528 893" preserveAspectRatio="xMinYMin slice">
        <defs>
          <linearGradient id="wall" gradientUnits="userSpaceOnUse" x1="446" y1="690" x2="696" y2="640">
            <stop offset="0" stop-color="#cfcfcf"/><stop offset=".12" stop-color="#e4e4e4"/><stop offset=".4" stop-color="#f0f0f0"/><stop offset=".6" stop-color="#e2e2e2"/><stop offset=".8" stop-color="#c2c2c2"/><stop offset=".92" stop-color="#9c9c9c"/><stop offset="1" stop-color="#727272"/>
          </linearGradient>
          <pattern id="dots" width="4" height="6" patternUnits="userSpaceOnUse"><path d="M0 0h1v1H0zM2 3h1v1H2z" fill="#222230"/></pattern>
        </defs>
        <g fill="none">
          <path d="M353 737L1167 114" stroke="#2f9a2f"/>
          <path d="M353 737L90 155" stroke="#1a1aa6"/>
          <path d="M353 737L667 1009" stroke="#9c1c1c"/>
          <path d="M353 737L90 509" stroke="#a02020" stroke-dasharray="1 4" stroke-width="1.4"/>
          <path d="M353 737L90 937" stroke="#2f7a2f" stroke-dasharray="1 4" stroke-width="1.2"/>
          <path d="M353 737L476 1009" stroke="#20208a" stroke-dasharray="1 4" stroke-width="1.4"/>
        </g>
        <path d="M419 572L495 789 512 808 533 821 559 829 590 830 618 825 644 814 667 798 684 777 695 754 698 732 666 509z" fill="url(#wall)" stroke="#000" stroke-width="2"/>
        <path d="M419 572L419 547 426 524 442 503 464 483 491 469 520 458 548 454 580 454 612 462 634 473 653 489 666 509 668 532 666 554 652 578 630 601 603 618 573 630 543 635 500 634 471 626 447 612 428 593z" fill="#fff"/>
        <path d="M419 572L419 547 426 524 442 503 464 483 491 469 520 458 548 454 580 454 612 462 634 473 653 489 666 509 668 532 666 554 652 578 630 601 603 618 573 630 543 635 500 634 471 626 447 612 428 593z" fill="url(#dots)" stroke="#000"/>
        <path d="M428 593L419 572 419 547 426 524 442 503 464 483 491 469 520 458 548 454 580 454 612 462 634 473 653 489 666 509 668 532" fill="none" stroke="#000" stroke-width="2"/>
        <ellipse cx="544" cy="543" rx="103" ry="72" transform="rotate(-13 544 543)" fill="none" stroke="#111"/>
        <path d="M762 580L573 611 552 614V628" fill="none" stroke="#111" stroke-dasharray="2 2"/>
        <path d="M546 624h15v15h-15z" fill="#fff"/><path d="M548 626h11v11h-11z" fill="#f0a094" stroke="#a83a38" stroke-width="2"/><path d="M551 632h6M553 629v3" stroke="#b85048"/>
        <path d="M763 581v15l3-3 4 6 3-2-4-5 4-1z" fill="#000" stroke="#fff" stroke-width=".6"/>
        <path d="M778 598c-1-7 4-9 8-6M782 598c-1-3 1-5 4-4" fill="none" stroke="#9d4a52" stroke-width="1.3"/>
      </svg>
    </main>

    <aside class="tray d-flex flex-column">
      <div class="tray-title d-flex align-items-center flex-shrink-0">
        <span class="flex-grow-1">기본 트레이</span>
        <svg width="8" height="12" viewBox="0 0 8 12" class="me-1"><path d="M2 1h4v6H2zM0 7h8M4 7v4M5 1v6" fill="none" stroke="#111" stroke-width="1.3"/></svg>
        <button class="close-red ms-1" type="button" aria-label="닫기">x</button>
      </div>
      <div class="d-flex flex-grow-1 overflow-hidden">
        <div class="stack d-flex flex-column">
          <div class="part d-flex align-items-center flex-shrink-0"><span class="flex-grow-1">요소 정보</span><button type="button">×</button></div>
          <div class="entity flex-shrink-0">
            <div class="d-flex justify-content-between"><div class="entity-name">면</div>
              <svg width="12" height="19" viewBox="0 0 12 19" class="me-1"><path d="M0 0h12v19H0z" fill="#111"/><path d="M1 1h10v7H1z" fill="#fff"/><path d="M2 2h8L6 7z"/><path d="M3 13h6M6 10v6" stroke="#fff" stroke-width="1.5"/></svg></div>
            <div class="facts d-flex mt-2 ps-1">
              <div class="swatch-tall"><div class="halves"></div></div>
              <div class="swatch-tall"><div class="halves"></div></div>
              <div class="fields">
                <div class="d-flex mb-1"><label class="lbl me-1" for="layer">레이어(<u>L</u>):</label><span class="pick"><select id="layer" class="box d-block"><option>Layer0</option></select></span></div>
                <div class="d-flex"><label class="lbl me-1" for="area">영역:</label><input id="area" class="box" value="208342 mm²" readonly></div>
              </div>
            </div>
          </div>
          <div class="part d-flex align-items-center flex-shrink-0"><span class="flex-grow-1">재질</span><button type="button">×</button></div>
          <div class="material d-flex flex-shrink-0">
            <div class="preview"><div class="halves"></div></div>
            <input class="box" value="기본값" disabled aria-label="재질 이름">
            <div class="d-flex flex-column align-items-end flex-grow-1 gap-2 pt-1">
              <svg width="12" height="18" viewBox="0 0 12 18" class="me-2"><path d="M0 0h12v18H0z" fill="#111"/><path d="M1 10h10v7H1z" fill="#fff"/><path d="M2 16h8l-4-5z"/><path d="M3 5h6" stroke="#fff" stroke-width="2"/></svg>
              <svg width="22" height="22" viewBox="0 0 22 22" class="me-1"><path d="M3 6l9-5 9 3v10l-9 6-9-4z" fill="#16140f"/><path d="M4 6l8-4 2 1-8 4zM9 8l8-4 2 1-7 4zM14 12l6-4v2l-6 4z" fill="#d8d4b0"/><circle cx="7" cy="16" r="5" fill="#fff" stroke="#111" stroke-width="1.4"/><path d="M4 16h6M7 13v6" stroke="#111" stroke-width="1.4"/></svg>
              <svg width="26" height="26" viewBox="0 0 26 26"><path d="M0 0h26v26H0z" fill="#fff"/><path d="M0 0l26 26H0z" fill="#a6b2ba"/></svg>
            </div>
          </div>
          <div class="tabs d-flex align-items-start flex-shrink-0"><button type="button" class="front">선택</button><button type="button" class="back">편집</button>
            <svg width="20" height="20" viewBox="0 0 20 20" class="ms-auto me-1"><path d="M13 5l2-4 4 1 0 4-4 2z" fill="#333"/><path d="M10 5l6 5" stroke="#333" stroke-width="3"/><path d="M12 8L3 17l-2 3 4-2 9-8" fill="#ddd" stroke="#444"/><path d="M6 13l-4 6 6-4z" fill="#d8a23c"/></svg></div>
          <div class="browse d-flex align-items-center flex-shrink-0"><button type="button" aria-label="뒤로"><svg width="18" height="18"><use href="#goback"/></svg></button><button type="button" aria-label="앞으로"><svg width="18" height="18"><use href="#gofwd"/></svg></button><button type="button" class="nest" aria-label="모델 내"><svg width="20" height="20"><use href="#home"/></svg></button><span class="pick wide"><select class="box" aria-label="라이브러리"><option>색상</option></select></span><button type="button" aria-label="세부 정보"><svg width="18" height="18"><use href="#details"/></svg></button></div>
          <div class="list d-flex flex-grow-1">
            <div class="chips d-flex flex-wrap">
              <span class="chip"><i style="background:#fbcfcf"></i></span><span class="chip"><i style="background:#f99d9d"></i></span><span class="chip me-5"><i style="background:#f56868"></i></span>
              <span class="chip"><i style="background:#f23636"></i></span><span class="chip"><i style="background:#ed0505"></i></span><span class="chip me-5"><i style="background:#cd0003"></i></span>
              <span class="chip"><i style="background:#9b0003"></i></span><span class="chip"><i style="background:#690003"></i></span><span class="chip me-5"><i style="background:#fddccf"></i></span>
              <span class="chip"><i style="background:#fab49c"></i></span><span class="chip"><i style="background:#fa9169"></i></span><span class="chip me-5"><i style="background:#f66b35"></i></span>
              <span class="chip"><i style="background:#f24306"></i></span><span class="chip"><i style="background:#cf370a"></i></span><span class="chip me-5"><i style="background:#992709"></i></span>
              <span class="chip"><i style="background:#671a04"></i></span><span class="chip"><i style="background:#fee7d0"></i></span><span class="chip me-5"><i style="background:#fbcf9b"></i></span>
            </div>
            <div class="scroller d-flex flex-column"><svg><use href="#up"/></svg><b></b><svg class="mt-auto"><use href="#down"/></svg></div>
          </div>
          <div class="split flex-shrink-0"></div>
          <div class="second flex-shrink-0">선택</div>
          <div class="browse d-flex align-items-center flex-shrink-0"><button type="button" aria-label="뒤로"><svg width="18" height="18"><use href="#goback"/></svg></button><button type="button" aria-label="앞으로"><svg width="18" height="18"><use href="#gofwd"/></svg></button><button type="button" class="nest" aria-label="모델 내"><svg width="20" height="20"><use href="#home"/></svg></button><span class="pick wide"><select class="box text-decoration-none" aria-label="라이브러리 2"><option>재질</option></select></span><button type="button" aria-label="세부 정보"><svg width="18" height="18"><use href="#details"/></svg></button></div>
          <div class="list short d-flex flex-shrink-0">
            <div class="chips d-flex flex-wrap"><span class="chip"><svg width="58" height="58"><use href="#folder"/></svg></span><span class="chip"><svg width="58" height="58"><use href="#folder"/></svg></span><span class="chip"><svg width="58" height="58"><use href="#folder"/></svg></span></div>
            <div class="scroller"><svg><use href="#up"/></svg><b></b></div>
          </div>
        </div>
        <div class="outer scroller d-flex flex-column"><svg><use href="#up"/></svg><b></b><svg class="mt-auto"><use href="#down"/></svg></div>
      </div>
    </aside>
    <div class="caption-band"></div>
  </div>

  <footer class="status d-flex align-items-center flex-shrink-0 overflow-hidden">
    <svg viewBox="0 0 18 20"><circle cx="9" cy="10" r="8" fill="none" stroke="#999" stroke-width="1.5"/><path d="M9 16c-1-4-3-5-3-8a3 3 0 0 1 6 0c0 3-2 4-3 8z" fill="#999"/></svg>
    <svg viewBox="0 0 18 20"><circle cx="9" cy="10" r="8" fill="none" stroke="#111" stroke-width="1.8"/><circle cx="9" cy="5" r="1.6"/><path d="M7 8h4v4h-1v4H8v-4H7z"/></svg>
    <svg viewBox="0 0 18 20"><circle cx="9" cy="10" r="8" fill="none" stroke="#999" stroke-width="1.5"/><circle cx="9" cy="7" r="3.4" fill="#999"/><path d="M3 15c0-5 12-5 12 0-3 4-9 4-12 0z" fill="#999"/></svg>
    <span class="rule mx-1"></span>
    <span class="ms-2 flex-grow-1">오프셋을 정의할 점을 선택하거나 값을 입력하십시오. Alt = 겹침 허용.</span>
    <span class="rule me-2"></span>
    <label for="distance" class="ms-1">거리</label>
    <input id="distance" class="measure" value="~ 48mm">
  </footer>
</div>
</body>
</html>
